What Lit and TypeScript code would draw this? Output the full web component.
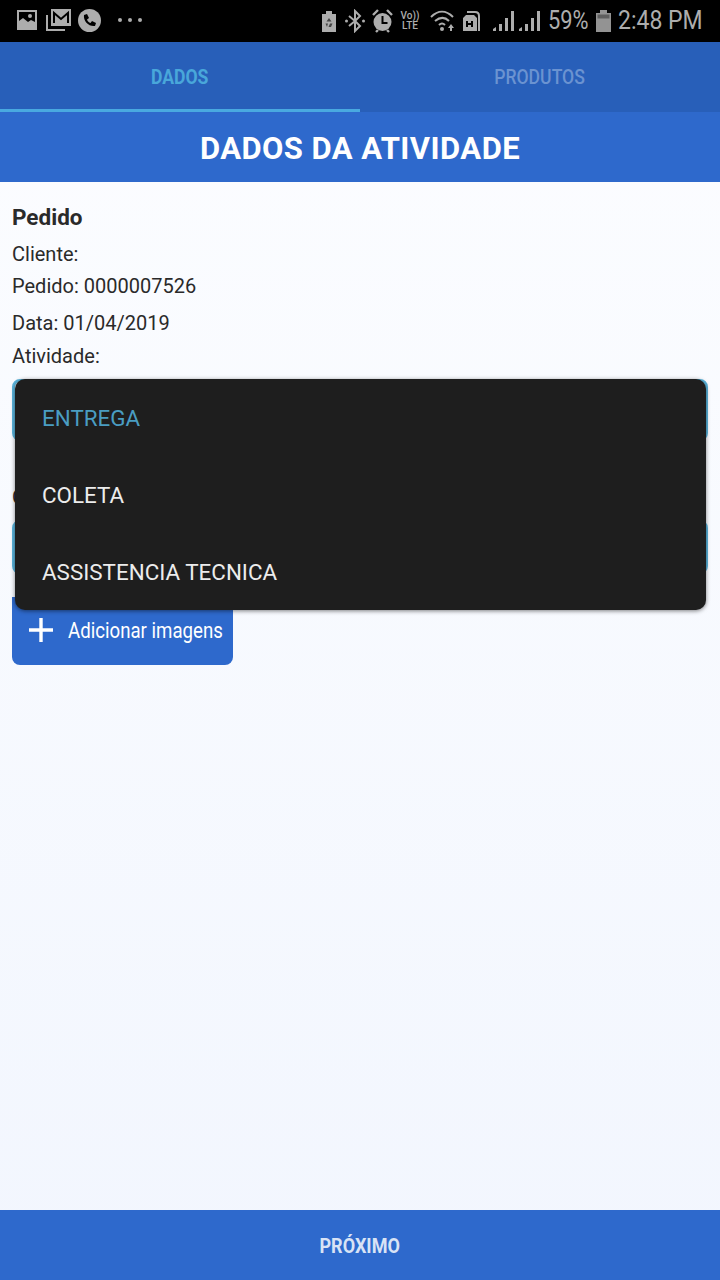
import { LitElement, html, css } from 'lit';
import { customElement } from 'lit/decorators.js';

@customElement('status-bar')
export class StatusBar extends LitElement {
  static styles = css`
    :host {
      display: flex;
      align-items: center;
      height: 42px;
      background: #000;
      color: #adadad;
      font-family: Roboto, sans-serif;
    }
    svg { display: block; flex: none; fill: #adadad; }
    .left { display: flex; align-items: center; padding: 0 0 2px 17px; }
    .right { display: flex; align-items: center; margin-left: auto; padding-right: 18px; }
    .dots { display: flex; gap: 6px; margin-left: 17px; }
    .dots i { width: 4px; height: 4px; border-radius: 50%; background: #adadad; }
    .volte { font-size: 10px; line-height: 10px; text-align: center; width: 20px; margin-left: 7px; font-weight: 500; }
    .pct, .time { display: inline-block; font-size: 25px; line-height: 30px; transform-origin: left; white-space: nowrap; }
    .pct { width: 40px; margin-left: 8px; transform: scaleX(.875); }
    .time { width: 84px; margin-left: 7px; transform: scaleX(.92); }
  `;

  render() {
    return html`
      <div class="left">
        <svg width="20" height="20" viewBox="0 0 20 20"><path fill-rule="evenodd" d="M0 0h20v20H0zM2 2v9l4-3 5 4 3-2 4 2V2zM13 4a2 2 0 1 1 0 4 2 2 0 0 1 0-4z"/></svg>
        <svg style="margin-left:9px" width="25" height="22" viewBox="0 0 25 22"><path d="M5 0h20v17H5zM0 6h2v14h17v2H0z"/><path d="M8 14V4l7 6 7-6v10" fill="none" stroke="#000" stroke-width="2"/></svg>
        <svg style="margin-left:7px" width="23" height="23" viewBox="0 0 23 23"><circle cx="11.500" cy="11.500" r="11.500"/><path d="M6 6l3-1 2 4-2 1.500c.6 1.600 1.900 3 3.500 3.500L14 12l4 2-1 3c-6 1-12-5-11-11z" fill="#000"/></svg>
        <div class="dots"><i></i><i></i><i></i></div>
      </div>
      <div class="right">
        <svg width="14" height="21" viewBox="0 0 14 21"><path d="M4 0h6v3h4v18H0V3h4z"/><path d="M7 7l2.500 3.500h-5zM3.500 12.500h2.500l-1 3.500zM8 12.500h2.500L9 16H6.500z" fill="#000" opacity=".6"/></svg>
        <svg style="margin-left:9px" width="20" height="24" viewBox="0 0 20 24"><path d="M10 2l5 5-5 5 5 5-5 5zM10 12l-6-5M10 12l-6 5" fill="none" stroke="#adadad" stroke-width="2"/><circle cx="1.500" cy="12" r="1.500"/><circle cx="18.500" cy="12" r="1.500"/></svg>
        <svg style="margin-left:7px" width="21" height="24" viewBox="0 0 21 24"><circle cx="10.500" cy="13" r="9"/><path d="M1 6l5-5M20 6l-5-5M4 23l2-2M17 23l-2-2" stroke="#adadad" stroke-width="2.400"/><path d="M10.500 7v7h5" fill="none" stroke="#000" stroke-width="2"/></svg>
        <div class="volte">Vo))<br />LTE</div>
        <svg style="margin-left:10px" width="26" height="22" viewBox="0 0 26 22"><path d="M1 7c7-7 15-7 22 0M5 11c5-4 10-4 14 0M9 15c2-2 4-2 6 0" fill="none" stroke="#adadad" stroke-width="2"/><circle cx="12" cy="19" r="2"/><path d="M21 14l3 4h-2v3h-2v-3h-2z"/></svg>
        <svg style="margin-left:6px" width="19" height="22" viewBox="0 0 19 22"><path d="M5 1h8q5 0 5 5v15h-2V6q0-3-3-3H5z"/><path fill-rule="evenodd" d="M4 5h8l3 3v13H1V8zM4 11v6h2v-2h3v2h2v-6H9v2H6v-2z"/></svg>
        <svg style="margin-left:11px" width="22" height="22" viewBox="0 0 22 22"><path d="M1 19l3-2v4H1zM7 14h3v7H7zM13 8h3v13h-3zM19 1h3v20h-3z"/></svg>
        <svg style="margin-left:5px" width="21" height="22" viewBox="0 0 21 22"><path d="M0 19l3-2v4H0zM6 14h3v7H6zM12 8h3v13h-3zM18 1h3v20h-3z"/></svg>
        <span class="pct">59%</span>
        <svg style="margin-left:8px" width="15" height="22" viewBox="0 0 15 22"><path d="M4 0h7v3h4v19H0V3h4z" opacity=".85"/><path d="M1.500 4.500h12v4h-12z" fill="#5e5e5e"/></svg>
        <span class="time">2:48 PM</span>
      </div>
    `;
  }
}

@customElement('app-root')
export class AppRoot extends LitElement {
  static styles = css`
    :host {
      display: flex;
      flex-direction: column;
      height: 1280px;
      position: relative;
      font-family: Roboto, sans-serif;
      color: #2a2a2a;
      background: linear-gradient(#fcfdff, #f2f6fe);
    }
    .tabs { display: flex; height: 70px; background: #285fb9; }
    .tab {
      flex: 1;
      display: flex;
      align-items: center;
      justify-content: center;
      padding-top: 3px;
      font-size: 20px;
      font-weight: 500;
      color: #6b93d1;
      border-bottom: 3px solid transparent;
      box-sizing: border-box;
    }
    .tab span { display: inline-block; transform: scaleX(.88); }
    .tab.active { color: #49a7da; font-weight: 700; border-bottom-color: #49a9e0; }
    .title {
      height: 70px;
      padding-top: 2px;
      box-sizing: border-box;
      background: #2e69cc;
      color: #fff;
      display: flex;
      align-items: center;
      justify-content: center;
      font-size: 31px;
      font-weight: 700;
      letter-spacing: .45px;
    }
    .content { flex: 1; padding: 22px 12px 0; display: flex; flex-direction: column; align-items: flex-start; font-size: 20px; }
    .heading { font-size: 22.500px; font-weight: 700; line-height: 26px; }
    .line { line-height: 24px; }
    .cliente { margin-top: 12px; }
    .numero { margin-top: 8px; }
    .data { margin-top: 13px; }
    .atividade { margin-top: 9px; }
    .obs { margin-top: 44px; }
    .field { align-self: stretch; height: 62px; box-sizing: border-box; border: 3px solid #5ab4dc; border-radius: 8px; }
    .field.first { margin-top: 11px; }
    .field.second { margin-top: 11px; height: 54px; }
    .add {
      margin-top: 23px;
      width: 221px;
      height: 68px;
      background: #2e69cc;
      border-radius: 0 0 8px 8px;
      color: #fff;
      display: flex;
      align-items: center;
      gap: 14px;
      padding: 0 0 2px 16px;
      box-sizing: border-box;
      font-size: 21.200px;
    }
    .add svg { flex: none; }
    .add span { display: inline-block; transform: scaleX(.88); transform-origin: left; white-space: nowrap; }
    .menu {
      position: absolute;
      left: 15px;
      top: 379px;
      width: 691px;
      height: 231px;
      background: #1e1e1e;
      border-radius: 10px;
      box-shadow: 0 1px 4px rgba(0, 0, 0, .5);
      display: flex;
      flex-direction: column;
      padding: 0 27px;
      box-sizing: border-box;
      font-size: 22.400px;
      color: #ececec;
    }
    .menu div { height: 77px; display: flex; align-items: center; }
    .menu .selected { color: #4a9dc2; }
    .footer {
      height: 70px;
      padding-top: 2px;
      box-sizing: border-box;
      background: #2e69cc;
      color: #d9e3f5;
      display: flex;
      align-items: center;
      justify-content: center;
      font-size: 20.500px;
      font-weight: 700;
    }
    .footer span { display: inline-block; transform: scaleX(.88); }
  `;

  render() {
    return html`
      <status-bar></status-bar>
      <div class="tabs">
        <div class="tab active"><span>DADOS</span></div>
        <div class="tab"><span>PRODUTOS</span></div>
      </div>
      <div class="title">DADOS DA ATIVIDADE</div>
      <div class="content">
        <div class="heading">Pedido</div>
        <div class="line cliente">Cliente:</div>
        <div class="line numero">Pedido: 0000007526</div>
        <div class="line data">Data: 01/04/2019</div>
        <div class="line atividade">Atividade:</div>
        <div class="field first"></div>
        <div class="line obs">O</div>
        <div class="field second"></div>
        <div class="add">
          <svg width="26" height="26" viewBox="0 0 26 26"><path d="M13 1v24M1 13h24" stroke="#fff" stroke-width="3.400"/></svg>
          <span>Adicionar imagens</span>
        </div>
      </div>
      <div class="footer"><span>PRÓXIMO</span></div>
      <div class="menu">
        <div class="selected">ENTREGA</div>
        <div>COLETA</div>
        <div>ASSISTENCIA TECNICA</div>
      </div>
    `;
  }
}
